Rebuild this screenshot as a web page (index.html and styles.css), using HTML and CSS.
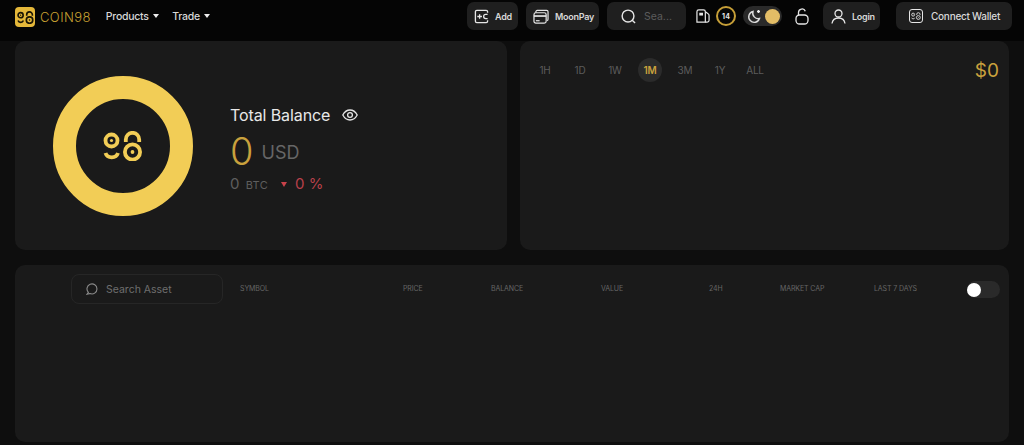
FILE: index.html
```html
<!DOCTYPE html>
<html>
<head>
	<meta charset="utf-8" />
	<title>Coin98 Portfolio</title>
	<link rel="stylesheet" href="styles.css">
</head>
<body>
<svg class="defs" width="0" height="0">
	<symbol id="mark" viewBox="0 0 40 30">
		<g fill="none" stroke="currentColor" stroke-width="3.800">
			<circle cx="8.500" cy="9.500" r="6" />
			<circle cx="29.500" cy="21" r="7.600" />
			<path d="M22.800 11V8.500a6.700 6.700 0 0 1 13.400 0V11" />
			<path d="M2.500 22a6.500 6 0 0 0 12.500 0" />
		</g>
		<circle cx="8.500" cy="9.500" r="1.600" fill="currentColor" />
		<circle cx="29.500" cy="21" r="1.900" fill="currentColor" />
	</symbol>
</svg>

<header class="topbar">
	<a class="logo" href="#">
		<span class="logo-box"><svg width="17" height="13"><use href="#mark" /></svg></span>
		<span class="logo-text">COIN98</span>
	</a>
	<nav class="menu">
		<a href="#">Products <i class="caret"></i></a>
		<a href="#">Trade <i class="caret"></i></a>
	</nav>
	<div class="actions">
		<a class="btn btn-add" href="#">
			<svg width="15" height="15" viewBox="0 0 16 16" fill="none" stroke="#e6e6e6" stroke-width="1.400"><path d="M14.500 4V3a1.500 1.500 0 0 0-1.500-1.500H3A1.500 1.500 0 0 0 1.500 3v10A1.500 1.500 0 0 0 3 14.500h10a1.500 1.500 0 0 0 1.500-1.500v-1" /><path d="M3.500 8h5M6 5.500v5M14.500 5.800h-2a2.200 2.200 0 0 0 0 4.400h2" /></svg>
			Add
		</a>
		<a class="btn btn-moon" href="#">
			<svg width="16" height="15" viewBox="0 0 17 16" fill="none" stroke="#e6e6e6" stroke-width="1.300"><path d="M3 4V3a1.500 1.500 0 0 1 1.500-1.500h10A1.500 1.500 0 0 1 16 3v8a1.500 1.500 0 0 1-1 1.400" /><rect x="1" y="4" width="13" height="11" rx="2" /><path d="M1 7.500h13" stroke-width="1.800" /><path d="M3 12.500h4" /></svg>
			MoonPay
		</a>
		<div class="btn btn-search">
			<svg width="15" height="15" viewBox="0 0 16 16" fill="none" stroke="#e6e6e6" stroke-width="1.500"><circle cx="7.500" cy="7.500" r="6.300" /><path d="M12 12l3 3" /></svg>
			<span>Sea...</span>
		</div>
		<svg class="gas" width="14" height="14" viewBox="0 0 15 15" fill="none" stroke="#e6e6e6" stroke-width="1.300"><path d="M1 14V3a2 2 0 0 1 2-2h5a2 2 0 0 1 2 2v11z" /><path d="M3.500 4h4v3h-4z" fill="#e6e6e6" stroke="none" /><path d="M10 3l3 2c.8.5 1 1 1 2v5a2 2 0 0 1-2 2h-2" /></svg>
		<span class="gas-count">14</span>
		<div class="theme">
			<svg width="15" height="15" viewBox="0 0 15 15" fill="none" stroke="#ddd" stroke-width="1.400"><path d="M6 2.500a5.500 5.500 0 1 0 6.500 7 5.500 5.500 0 0 1-6.500-7z" /><path d="M11.500 1v3M10 2.500h3" stroke="#eee" /></svg>
			<i class="theme-dot"></i>
		</div>
		<svg class="lock" width="14" height="17" viewBox="0 0 14 17" fill="none" stroke="#e6e6e6" stroke-width="1.300"><rect x="1" y="7" width="12" height="9" rx="3.500" /><path d="M3.500 7V4.500a3.500 3.500 0 0 1 6.800-1.200" /></svg>
		<a class="btn btn-login" href="#">
			<svg width="15" height="15" viewBox="0 0 15 15" fill="none" stroke="#e6e6e6" stroke-width="1.300"><circle cx="7.500" cy="4.500" r="3.500" /><path d="M1 14.500c.5-3.500 3-5.500 6.500-5.500s6 2 6.500 5.500" /></svg>
			Login
		</a>
		<a class="btn btn-wallet" href="#">
			<span class="wallet-box"><svg width="10" height="8"><use href="#mark" /></svg></span>
			Connect Wallet
		</a>
	</div>
</header>

<main class="page">
	<div class="top-cards">
		<section class="card balance">
			<div class="donut"><svg width="40" height="30"><use href="#mark" /></svg></div>
			<div class="balance-info">
				<div class="balance-title">
					Total Balance
					<svg width="16" height="12" viewBox="0 0 16 12" fill="none" stroke="#e6e6e6" stroke-width="1.300"><path d="M.800 6C2.500 2.800 5 1 8 1s5.500 1.800 7.200 5c-1.700 3.200-4.200 5-7.200 5S2.500 9.200.800 6z" /><circle cx="8" cy="6" r="2.400" /></svg>
				</div>
				<div class="balance-usd"><b>0</b> <span>USD</span></div>
				<div class="balance-sub">
					<span class="btc">0 <small>BTC</small></span>
					<i class="down"></i>
					<span class="pct">0 %</span>
				</div>
			</div>
		</section>
		<section class="card chart">
			<ul class="ranges">
				<li>1H</li>
				<li>1D</li>
				<li>1W</li>
				<li class="on">1M</li>
				<li>3M</li>
				<li>1Y</li>
				<li>ALL</li>
			</ul>
			<div class="chart-value">$0</div>
		</section>
	</div>
	<section class="card assets">
		<div class="asset-search">
			<svg width="12" height="12" viewBox="0 0 12 12" fill="none" stroke="#8a8a8a" stroke-width="1.100"><path d="M2.400 9.400A5 5 0 1 1 4 10.500c-1 .3-2 .6-3 .8z" /></svg>
			Search Asset
		</div>
		<div class="asset-cols">
			<span>SYMBOL</span>
			<span>PRICE</span>
			<span>BALANCE</span>
			<span>VALUE</span>
			<span>24H</span>
			<span>MARKET CAP</span>
			<span>LAST 7 DAYS</span>
		</div>
		<div class="switch"><i></i></div>
	</section>
</main>
</body>
</html>
```

FILE: styles.css
```css
*{
	box-sizing: border-box;
}
html, body{
	margin: 0;
	padding: 0;
	height: 445px;
	overflow: hidden;
}
body{
	background-color: #0e0e0e;
	color: #e6e6e6;
	font-family: Inter, "Liberation Sans", Arial, sans-serif;
	font-size: 11px;
}
a{
	color: inherit;
	text-decoration: none;
}
.defs{
	display: block;
	height: 0;
}
/* barre du haut */
.topbar{
	display: flex;
	align-items: center;
	height: 41px;
	padding: 2px 12px 11px 15px;
	background-color: #050505;
}
.logo{
	display: flex;
	align-items: center;
	gap: 5px;
	padding-top: 2px;
}
.logo-box{
	display: flex;
	align-items: center;
	justify-content: center;
	width: 20px;
	height: 20px;
	background-color: #e5b83a;
	border-radius: 4px;
	color: #1a1505;
}
.logo-text{
	color: #c9a232;
	font-size: 13px;
	font-weight: 300;
	letter-spacing: 0.4px;
}
.menu{
	display: flex;
	gap: 13px;
	margin-left: 15px;
	font-size: 10.500px;
	font-weight: 500;
	letter-spacing: -0.25px;
	color: #d8d8d8;
}
.caret{
	display: inline-block;
	margin: 0 0 2px 2px;
	border-left: 3px solid transparent;
	border-right: 3px solid transparent;
	border-top: 4px solid #eee;
}
.actions{
	display: flex;
	align-items: center;
	margin-left: auto;
}
.btn{
	display: flex;
	align-items: center;
	height: 28px;
	background-color: #1f1f1f;
	border-radius: 7px;
	font-size: 9px;
	font-weight: 600;
	letter-spacing: -0.25px;
	color: #d8d8d8;
}
.btn-add{
	width: 51px;
	gap: 6px;
	padding-left: 7px;
}
.btn-moon{
	width: 73px;
	gap: 6px;
	margin-left: 8px;
	padding-left: 7px;
}
.btn-search{
	width: 79px;
	gap: 8px;
	margin-left: 8px;
	padding-left: 14px;
	color: #5c5c5c;
	font-size: 10.500px;
	font-weight: 400;
	letter-spacing: 0;
}
.gas{
	margin-left: 10px;
}
.gas-count{
	display: flex;
	align-items: center;
	justify-content: center;
	width: 20px;
	height: 20px;
	margin-left: 6px;
	border: 2px solid #c69f38;
	border-radius: 50%;
	font-size: 7px;
	font-weight: 700;
}
.theme{
	display: flex;
	align-items: center;
	justify-content: space-between;
	width: 39px;
	height: 20px;
	margin-left: 7px;
	padding: 0 2px 0 4px;
	background-color: #2a2a2a;
	border-radius: 10px;
}
.theme-dot{
	width: 15px;
	height: 15px;
	background-color: #e3bd66;
	border-radius: 50%;
}
.lock{
	margin-left: 13px;
}
.btn-login{
	width: 57px;
	gap: 6px;
	margin-left: 14px;
	padding-left: 8px;
}
.btn-wallet{
	width: 116px;
	gap: 8px;
	margin-left: 16px;
	padding-left: 13px;
	font-size: 10px;
	font-weight: 500;
}
.wallet-box{
	display: flex;
	align-items: center;
	justify-content: center;
	width: 14px;
	height: 14px;
	border: 1.200px solid #e6e6e6;
	border-radius: 3px;
}
/* cartes */
.page{
	padding: 0 15px;
}
.top-cards{
	display: flex;
	gap: 13px;
}
.card{
	background-color: #1a1a1a;
	border-radius: 10px;
}
.balance{
	display: flex;
	gap: 37px;
	width: 492px;
	height: 209px;
	padding: 35px 0 0 38px;
}
.donut{
	display: flex;
	align-items: center;
	justify-content: center;
	flex: none;
	width: 140px;
	height: 140px;
	border: 23.500px solid #f2cd56;
	border-radius: 50%;
	color: #f2cd56;
}
.balance-info{
	padding-top: 28px;
}
.balance-title{
	display: flex;
	align-items: center;
	gap: 12px;
	height: 22px;
	font-size: 16px;
	letter-spacing: -0.1px;
	color: #e8e8e8;
}
.balance-usd{
	display: flex;
	align-items: center;
	gap: 8px;
	height: 44px;
	margin-top: 3px;
}
.balance-usd b{
	color: #c9a13d;
	font-size: 38px;
	font-weight: 300;
	line-height: 44px;
}
.balance-usd span{
	padding-top: 2px;
	color: #666;
	font-size: 18px;
}
.balance-sub{
	display: flex;
	align-items: center;
	font-size: 15px;
	color: #5e5e5e;
	margin-top: 1px;
}
.btc small{
	margin-left: 2px;
	font-size: 11px;
	letter-spacing: 0.3px;
}
.down{
	width: 6px;
	height: 6px;
	margin: 1px 8px 0 13px;
	background-color: #c9424a;
	clip-path: polygon(0 15%, 100% 15%, 50% 100%);
}
.pct{
	color: #b8404a;
	letter-spacing: 0.1px;
}
.chart{
	display: flex;
	justify-content: space-between;
	width: 489px;
	height: 209px;
	padding: 17px 10px 0 13px;
}
.ranges{
	display: flex;
	gap: 11px;
	height: 24px;
	margin: 0;
	padding: 0;
	list-style: none;
}
.ranges li{
	width: 24px;
	color: #5c5c5c;
	font-size: 10px;
	line-height: 24px;
	text-align: center;
	letter-spacing: -0.2px;
}
.ranges .on{
	background-color: #2b2b2b;
	border-radius: 50%;
	color: #c9a13d;
	font-weight: 600;
}
.chart-value{
	padding-top: 1px;
	color: #c9a13d;
	font-size: 19px;
	line-height: 24px;
}
.assets{
	display: flex;
	align-items: flex-start;
	height: 177px;
	margin-top: 15px;
	padding: 9px 9px 0 56px;
}
.asset-search{
	display: flex;
	align-items: center;
	gap: 8px;
	flex: none;
	width: 152px;
	height: 30px;
	padding-left: 14px;
	border: 1px solid #262626;
	border-radius: 8px;
	color: #6e6e6e;
	font-size: 10.500px;
}
.asset-cols{
	display: grid;
	grid-template-columns: 163px 88px 110px 108px 71px 94px 93px;
	width: 727px;
	margin-left: 17px;
	color: #666;
	font-size: 7px;
	letter-spacing: -0.1px;
	line-height: 30px;
}
.switch{
	flex: none;
	width: 33px;
	height: 17px;
	margin-top: 7px;
	background-color: #2a2a2a;
	border-radius: 9px;
}
.switch i{
	display: block;
	width: 14px;
	height: 14px;
	margin: 1.500px 0 0 0;
	background-color: #fff;
	border-radius: 50%;
}
```
